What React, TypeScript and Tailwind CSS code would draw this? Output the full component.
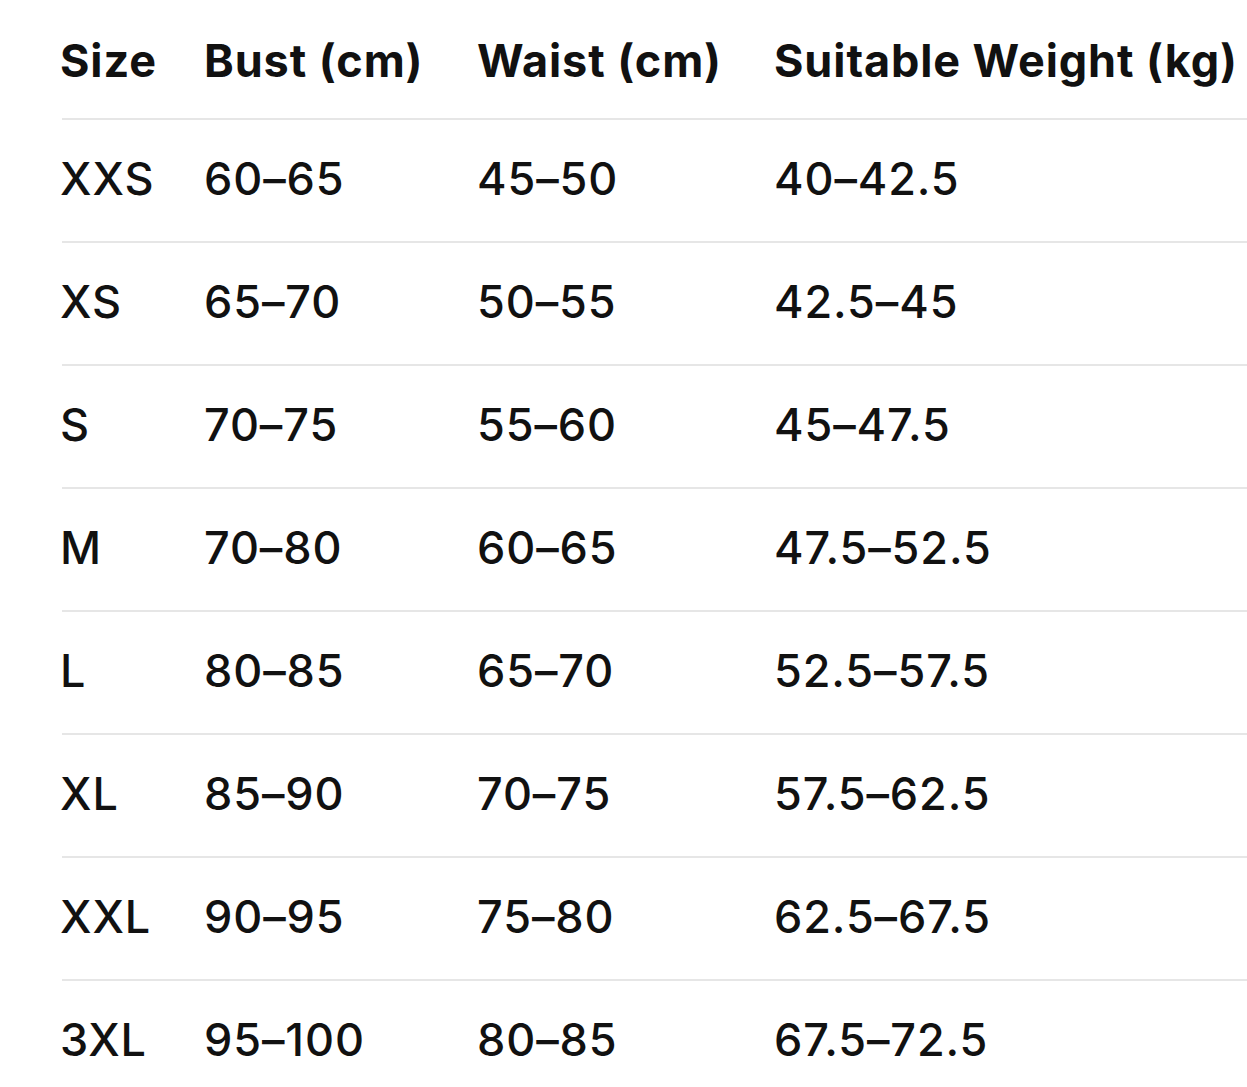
const rows = [
  ["XXS", "60–65", "45–50", "40–42.5"],
  ["XS", "65–70", "50–55", "42.5–45"],
  ["S", "70–75", "55–60", "45–47.5"],
  ["M", "70–80", "60–65", "47.5–52.5"],
  ["L", "80–85", "65–70", "52.5–57.5"],
  ["XL", "85–90", "70–75", "57.5–62.5"],
  ["XXL", "90–95", "75–80", "62.5–67.5"],
  ["3XL", "95–100", "80–85", "67.5–72.5"],
]

const cols = "grid grid-cols-[144px_273px_297px_1fr]"

export default function App() {
  return (
    <div className="min-h-[1087px] w-full overflow-hidden bg-white text-[#111111] [font-family:Inter,'Liberation_Sans',sans-serif]">
      <div className="ml-[62px]">
        {/* Header */}
        <div className={`${cols} -ml-[2px] h-[118px] items-center pt-[2px] text-[45px] leading-none font-bold tracking-[0.9px] whitespace-nowrap`}>
          <div>Size</div>
          <div>Bust (cm)</div>
          <div>Waist (cm)</div>
          <div>Suitable Weight (kg)</div>
        </div>

        {/* Body */}
        {rows.map((r) => (
          <div
            key={r[0]}
            className="h-[123px] border-t-2 border-[#e6e6e6]"
          >
            <div className={`${cols} -ml-[2px] h-full items-center pb-[5px] text-[45px] leading-none font-medium tracking-[0.9px] whitespace-nowrap`}>
              {r.map((c, i) => (
                <div key={i}>{c}</div>
              ))}
            </div>
          </div>
        ))}
      </div>
    </div>
  )
}
